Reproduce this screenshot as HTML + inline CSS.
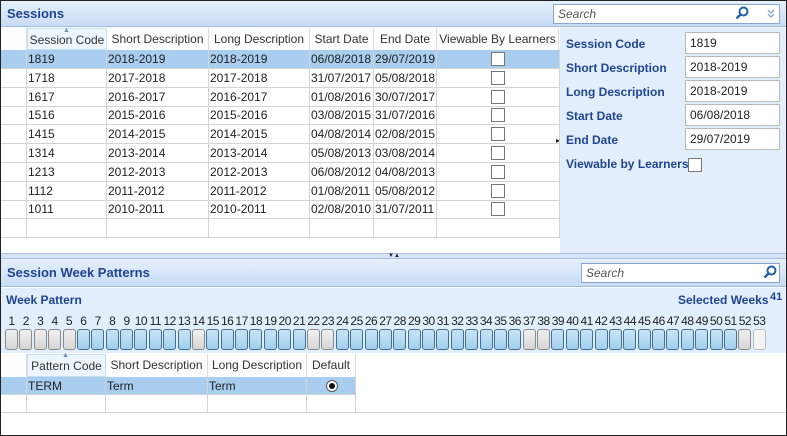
<!DOCTYPE html>
<html><head><meta charset="utf-8"><style>
*{margin:0;padding:0;box-sizing:border-box}
body{width:787px;height:436px;overflow:hidden;font-family:"Liberation Sans",sans-serif;font-size:12px;color:#222;background:#fff;position:relative}
.frame{position:absolute;left:0;top:0;width:787px;height:436px;border:1px solid #222}
.a{position:absolute}
.title{background:linear-gradient(#e6f0fc,#c8dcf5);border-bottom:1px solid #9fbde3}
.title b{position:absolute;left:6px;color:#1f4592;font-size:13px}
.search{background:#fff;border:1px solid #8aa6cf;font-style:italic;color:#555;font-size:12px;padding:2px 4px}
.cell{position:absolute;border-right:1px solid #d4d4d4;border-bottom:1px solid #d4d4d4;padding-left:1px;line-height:18px;white-space:nowrap;overflow:hidden}
.hd{position:absolute;background:#fdfdfd;border-right:1px solid #dcdcdc;line-height:22px;text-align:center;color:#333}
.cb{position:absolute;width:14px;height:14px;border:1px solid #777;background:#fff}
.lbl{position:absolute;color:#1f4592;font-weight:bold;font-size:12px}
.inp{position:absolute;background:#fff;border:1px solid #b8b8b8;padding-left:4px;line-height:20px}
.wk{position:absolute;top:329px;width:13px;height:21px;border-radius:3px}
.on{background:linear-gradient(#c8e4f5,#a2d0ee);border:1px solid #3f6f96}
.off{background:linear-gradient(#f0f0f0,#d6d6d6);border:1px solid #8a8a8a}
.wn{position:absolute;top:314px;font-size:12px;width:15px;text-align:center;letter-spacing:-0.5px}
</style></head><body>
<div class="a title" style="left:1px;top:1px;width:785px;height:26px"><b style="top:5px">Sessions</b></div>
<div class="a search" style="left:553px;top:4px;width:227px;height:20px">Search</div>
<svg class="a" style="left:735px;top:6px" width="14" height="14"><circle cx="8.5" cy="5.5" r="4" fill="none" stroke="#1f5fa8" stroke-width="2"/><line x1="5.5" y1="8.5" x2="1.5" y2="12.5" stroke="#1f5fa8" stroke-width="2.5"/></svg>
<svg class="a" style="left:766px;top:9px" width="10" height="10"><path d="M2 1 L5 4 L8 1 M2 5 L5 8 L8 5" fill="none" stroke="#7a9cc8" stroke-width="1.2"/></svg>
<div class="a" style="left:560px;top:28px;width:226px;height:226px;background:#e2eefc"></div>
<div class="lbl" style="left:566px;top:37px">Session Code</div>
<div class="lbl" style="left:566px;top:61px">Short Description</div>
<div class="lbl" style="left:566px;top:85px">Long Description</div>
<div class="lbl" style="left:566px;top:109px">Start Date</div>
<div class="lbl" style="left:566px;top:133px">End Date</div>
<div class="lbl" style="left:566px;top:157px">Viewable by Learners</div>
<div class="cb" style="left:688px;top:158px"></div>
<div class="inp" style="left:685px;top:32px;width:95px;height:22px">1819</div>
<div class="inp" style="left:685px;top:56px;width:95px;height:22px">2018-2019</div>
<div class="inp" style="left:685px;top:80px;width:95px;height:22px">2018-2019</div>
<div class="inp" style="left:685px;top:104px;width:95px;height:22px">06/08/2018</div>
<div class="inp" style="left:685px;top:128px;width:95px;height:22px">29/07/2019</div>
<div class="a" style="left:556px;top:136px;font-size:8px">&#9656;</div>
<div class="a" style="left:1px;top:28px;width:559px;height:22px;background:#fdfdfd;border-bottom:1px solid #d4d4d4"></div>
<div class="hd" style="left:1px;top:28px;width:26px;height:22px"></div>
<div class="hd" style="left:27px;top:28px;width:80px;height:22px;background:#eef6fd;border:1px solid #c5e0f5">Session Code</div>
<div class="a" style="left:63px;top:27px;font-size:7px;color:#6a8fb8">&#9650;</div>
<div class="hd" style="left:107px;top:28px;width:102px;height:22px">Short Description</div>
<div class="hd" style="left:209px;top:28px;width:101px;height:22px">Long Description</div>
<div class="hd" style="left:310px;top:28px;width:64px;height:22px">Start Date</div>
<div class="hd" style="left:374px;top:28px;width:63px;height:22px">End Date</div>
<div class="hd" style="left:437px;top:28px;width:122px;height:22px">Viewable By Learners</div>
<div id="rows"></div>
<div class="a" style="left:1px;top:253px;width:785px;height:6px;background:#d6e4f5;border-top:1px solid #a8c2e2;border-bottom:1px solid #a8c2e2"></div>
<div class="a" style="left:388px;top:253px;font-size:6px">&#9660;&#9650;</div>
<div class="a title" style="left:1px;top:259px;width:785px;height:28px"><b style="top:6px">Session Week Patterns</b></div>
<div class="a search" style="left:581px;top:263px;width:199px;height:20px">Search</div>
<svg class="a" style="left:763px;top:265px" width="14" height="14"><circle cx="8.5" cy="5.5" r="4" fill="none" stroke="#1f5fa8" stroke-width="2"/><line x1="5.5" y1="8.5" x2="1.5" y2="12.5" stroke="#1f5fa8" stroke-width="2.5"/></svg>
<div class="a" style="left:1px;top:288px;width:785px;height:65px;background:#e2eefc"></div>
<div class="lbl" style="left:6px;top:293px">Week Pattern</div>
<div class="lbl" style="left:678px;top:293px">Selected Weeks</div>
<div class="lbl" style="left:770px;top:291px;font-size:11px">41</div>
<div id="weeks"></div>
<div class="a" style="left:1px;top:353px;width:785px;height:82px;background:#fff"></div>
<div class="a" style="left:1px;top:354px;width:355px;height:23px;background:#fdfdfd;border-bottom:1px solid #d4d4d4"></div>
<div class="hd" style="left:1px;top:354px;width:26px;height:23px"></div>
<div class="hd" style="left:27px;top:354px;width:79px;height:23px;background:#eef6fd;border:1px solid #c5e0f5">Pattern Code</div>
<div class="a" style="left:62px;top:352px;font-size:7px;color:#6a8fb8">&#9650;</div>
<div class="hd" style="left:106px;top:354px;width:102px;height:23px">Short Description</div>
<div class="hd" style="left:208px;top:354px;width:99px;height:23px">Long Description</div>
<div class="hd" style="left:307px;top:354px;width:49px;height:23px">Default</div>
<div class="a" style="left:1px;top:377px;width:355px;height:18px;background:#a9cdef"></div>
<div class="cell" style="left:1px;top:377px;width:26px;height:18px"></div>
<div class="cell" style="left:27px;top:377px;width:79px;height:18px">TERM</div>
<div class="cell" style="left:106px;top:377px;width:102px;height:18px">Term</div>
<div class="cell" style="left:208px;top:377px;width:99px;height:18px">Term</div>
<div class="cell" style="left:307px;top:377px;width:49px;height:18px"></div>
<div class="a" style="left:326px;top:380px;width:12px;height:12px;border-radius:50%;border:1px solid #555;background:#fff"><div style="margin:2px;width:6px;height:6px;border-radius:50%;background:#111"></div></div>
<div class="cell" style="left:1px;top:395px;width:26px;height:18px"></div>
<div class="cell" style="left:27px;top:395px;width:79px;height:18px"></div>
<div class="cell" style="left:106px;top:395px;width:102px;height:18px"></div>
<div class="cell" style="left:208px;top:395px;width:99px;height:18px"></div>
<div class="cell" style="left:307px;top:395px;width:49px;height:18px"></div>
<div class="cell" style="left:356px;top:377px;width:430px;height:36px;border-right:none"></div>
<div class="frame"></div>
<script>
var d=[["1819","2018-2019","06/08/2018","29/07/2019"],["1718","2017-2018","31/07/2017","05/08/2018"],["1617","2016-2017","01/08/2016","30/07/2017"],["1516","2015-2016","03/08/2015","31/07/2016"],["1415","2014-2015","04/08/2014","02/08/2015"],["1314","2013-2014","05/08/2013","03/08/2014"],["1213","2012-2013","06/08/2012","04/08/2013"],["1112","2011-2012","01/08/2011","05/08/2012"],["1011","2010-2011","02/08/2010","31/07/2011"],["","","",""]];
var xs=[1,27,107,209,310,374,437,560],h="";
d.forEach(function(r,i){var t=50+i*18.8;var v=["",r[0],r[1],r[1],r[2],r[3],""];
if(i==0)h+='<div class="a" style="left:1px;top:'+t+'px;width:559px;height:19px;background:#a9cdef"></div>';
for(var c=0;c<7;c++)h+='<div class="cell" style="left:'+xs[c]+'px;top:'+t+'px;width:'+(xs[c+1]-xs[c])+'px;height:19px">'+v[c]+'</div>';
if(r[0])h+='<div class="cb" style="left:491px;top:'+(t+2)+'px"></div>';});
document.getElementById("rows").innerHTML=h;
var off=[1,2,3,4,5,14,22,23,37,38,52,53],w="";
for(var k=1;k<=53;k++){var x=5+(k-1)*14.38;w+='<div class="wn" style="left:'+(x-1)+'px">'+k+'</div><div class="wk '+(off.indexOf(k)>=0?'off':'on')+'" style="left:'+x+'px'+(k==53?';background:#f4f4f4;border-color:#bbb':'')+'"></div>';}
document.getElementById("weeks").innerHTML=w;
</script>
</body></html>
